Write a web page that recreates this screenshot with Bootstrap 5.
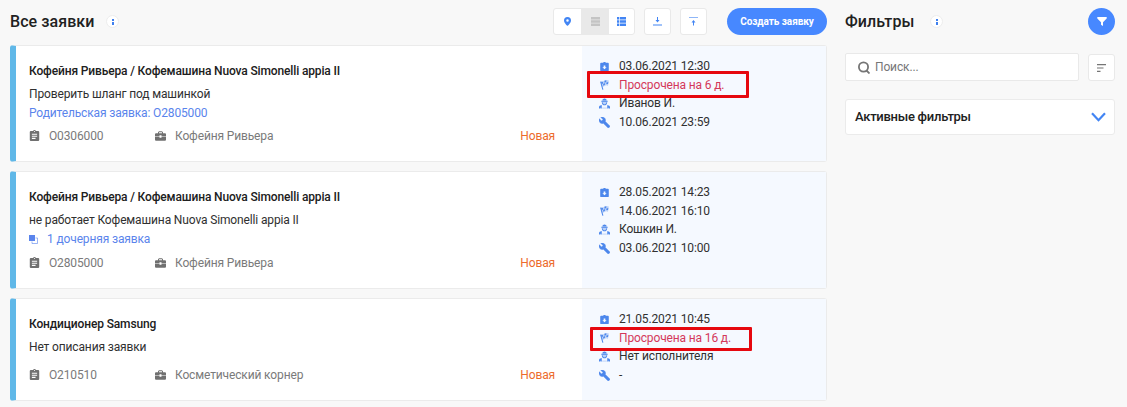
<!DOCTYPE html>
<html lang="ru">
<head>
<meta charset="utf-8">
<meta name="viewport" content="width=device-width, initial-scale=1">
<title>Все заявки</title>
<link href="https://cdn.jsdelivr.net/npm/bootstrap@5.3.0/dist/css/bootstrap.min.css" rel="stylesheet">
<style>
body{font:400 12px/18px Roboto,sans-serif;letter-spacing:-.14px;background:#f8f8f8;color:#303030;height:407px;overflow:hidden}
svg{display:block;flex:none;fill:currentColor}
svg.line{fill:none}
.page{padding:8px 12px 0 10px}
.list-col{width:817px}
.filter-col{width:270px;margin-left:18px}
.bar{height:27px}
.bar h1{font-size:16px;line-height:27px;font-weight:500;color:#212121;letter-spacing:.07px}
.info{width:13px;height:13px;background:#fff;border:1px solid #ededed;color:#3f80ef}
.tool{height:27px;background:#fff;border:1px solid #e9e9e9;border-radius:3px;color:#4285f4}
.tool span{height:100%;display:flex;align-items:center;justify-content:center}
.create{width:100px;height:27px;border-radius:14px;background:#4788ff;color:#fff;font-size:10px;font-weight:700;letter-spacing:-.06px;padding:0}
.ticket{border:1px solid #ebebeb;border-left:6px solid #60b8e8;border-radius:3px;background:#fff;display:flex;margin-bottom:9px}
.body-col{width:566px;padding:15px 27px 15px 13px}
.side-col{background:#f5f9ff;padding:11px 0 0 17px;line-height:18.65px}
.name{font-weight:500;line-height:20px;color:#202020;letter-spacing:-.14px;margin-bottom:3px}
.desc{line-height:20px}
.lnk{line-height:18px;color:#5a84ec}
.meta{color:#7a7a7a;line-height:20px}
.meta .num{width:126px;gap:9px}
.meta .num svg{margin-bottom:1px;color:#707070}
.state{color:#ed6b2c}
.side-col .d-flex{gap:9px}
.side-col svg{color:#4c87ec}
.side-col .late{color:#d4385a}
.mark-box{position:absolute;border:3px solid #e6080f;border-radius:1px}
.search{width:234px;height:28px;border:1px solid #e9e9e9;border-radius:2px;background:#fff;color:#777;padding-left:12px;gap:5px}
.panel{height:36px;border:1px solid #ebebeb;border-radius:3px;background:#fff;margin-top:18px;padding:0 8px 0 9px;font-size:13px;font-weight:500;color:#212121;letter-spacing:-.27px}
</style>
</head>
<body>
<svg width="0" height="0" class="position-absolute">
<symbol id="board" viewBox="2.500 1 19 21"><path fill-rule="evenodd" d="M19 3h-4.200a3 3 0 0 0-5.600 0H5a2 2 0 0 0-2 2v15a2 2 0 0 0 2 2h14a2 2 0 0 0 2-2V5a2 2 0 0 0-2-2zM12 3a1 1 0 1 1 0 2 1 1 0 0 1 0-2zM7 8v2h10V8zm0 4v2h10v-2zm0 4v2h7v-2z"/></symbol>
<symbol id="case" viewBox="1 2 22 19"><path d="M10 15v-2H1v6a2 2 0 0 0 2 2h18a2 2 0 0 0 2-2v-6h-9v2zM21 6h-4V4l-2-2H9L7 4v2H3a2 2 0 0 0-2 2v4h9V10h4v2h9V8a2 2 0 0 0-2-2zm-6 0H9V4h6z"/></symbol>
<symbol id="due" viewBox="2 1 20 21"><path fill-rule="evenodd" d="M20 3h-4.500a4 4 0 0 0-7 0H4a2 2 0 0 0-2 2v15a2 2 0 0 0 2 2h16a2 2 0 0 0 2-2V5a2 2 0 0 0-2-2zm-8 15-5-5h3V9h4v4h3z"/></symbol>
<symbol id="flag" viewBox="1 0 22 23"><path d="M2 4l2-.8L9.500 22 7 22.500z"/><path d="M3 4Q8 5 11 2t11-1l-2 12q-5-2-8 1t-6 1z" opacity=".35"/><path d="M4 4l4 0 1 4-4 1zM12 1.500l4-1 0 4-4 2zM9 9l4-2 0 4-4 2zM17 5l4 0-1 4-4 0z"/></symbol>
<symbol id="man" viewBox="0 1 24 22"><path d="M5 6h14v2H5zM8 5a4 4 0 0 1 8 0z"/><path d="M7 2h10v12H7z" opacity=".35"/><path d="M6 9c0 9 12 9 12 0h-2c0 6-8 6-8 0zM0 23v-4q0-3 6-4v8H4v-3l-1 3zM18 15q6 1 6 4v4h-3l-1-3v3h-2z"/><path d="M7 21h10v2H7z" opacity=".35"/></symbol>
<symbol id="wrench" viewBox="1 1 22 22"><path stroke="currentColor" d="M22.700 19l-9.100-9.100c.9-2.300.4-5-1.500-6.900-2-2-5-2.400-7.400-1.300L9 6 6 9 1.600 4.700C.4 7.100.9 10.100 2.900 12.100c1.900 1.900 4.600 2.400 6.900 1.500l9.100 9.100c.4.4 1 .4 1.400 0l2.300-2.300c.5-.4.5-1.100.1-1.400z"/></symbol>
<symbol id="inf" viewBox="0 0 2 6"><path d="M0 0h2v2H0zM0 3h2v3H0z"/></symbol>
</svg>
<div class="page d-flex align-items-start">
<main class="list-col">
  <div class="bar d-flex align-items-center">
    <h1 class="m-0">Все заявки</h1>
    <span class="info rounded-circle d-flex align-items-center justify-content-center" style="margin-left:12px"><svg width="2" height="6"><use href="#inf"/></svg></span>
    <div class="tool d-flex ms-auto" style="width:82px">
      <span style="width:27px"><svg width="7" height="9" viewBox="0 0 14 18"><path fill-rule="evenodd" d="M7 0a7 7 0 0 0-7 7c0 5 7 11 7 11s7-6 7-11a7 7 0 0 0-7-7zm0 4.500a2.500 2.500 0 1 1 0 5 2.500 2.500 0 0 1 0-5z"/></svg></span>
      <span style="width:28px;background:#e9e9e9;color:#c4c4c4"><svg width="9" height="9"><path d="M0 0h9v2.500H0zM0 3.300h9v2.400H0zM0 6.500h9V9H0z"/></svg></span>
      <span style="width:25px"><svg width="9" height="9"><path d="M0 0h2v2.400H0zM2.700 0H9v2.400H2.700zM0 3.300h2v2.400H0zM2.700 3.300H9v2.400H2.700zM0 6.600h2V9H0zM2.700 6.600H9V9H2.700z"/></svg></span>
    </div>
    <div class="tool" style="width:27px;margin-left:9px"><span><svg width="9" height="9"><path d="M0 7.500h9v1H0zM4 0h1v3h1.500l-2 2.500L2.500 3H4z"/></svg></span></div>
    <div class="tool" style="width:27px;margin-left:9px"><span><svg width="9" height="9"><path d="M0 0h9v1H0z" opacity=".6"/><path d="M4 8.500h1v-3h1.500l-2-2.500-2 2.500H4z"/></svg></span></div>
    <button class="btn create border-0" style="margin-left:20px">Создать заявку</button>
  </div>

  <article class="ticket position-relative" style="height:117px;margin-top:10px">
    <div class="body-col d-flex flex-column">
      <div class="name">Кофейня Ривьера / Кофемашина Nuova Simonelli appia II</div>
      <div class="desc">Проверить шланг под машинкой</div>
      <div class="lnk">Родительская заявка: О2805000</div>
      <div class="meta d-flex mt-auto">
        <div class="num d-flex align-items-center"><svg width="11" height="11"><use href="#board"/></svg>О0306000</div>
        <div class="num d-flex align-items-center"><svg width="11" height="10"><use href="#case"/></svg>Кофейня Ривьера</div>
        <div class="state ms-auto">Новая</div>
      </div>
    </div>
    <div class="side-col flex-grow-1">
      <div class="d-flex align-items-center"><svg width="11" height="9"><use href="#due"/></svg>03.06.2021 12:30</div>
      <div class="d-flex align-items-center late"><svg width="11" height="10"><use href="#flag"/></svg>Просрочена на 6 д.</div>
      <div class="d-flex align-items-center"><svg width="11" height="11"><use href="#man"/></svg>Иванов И.</div>
      <div class="d-flex align-items-center"><svg width="11" height="11"><use href="#wrench"/></svg>10.06.2021 23:59</div>
    </div>
    <div class="mark-box" style="left:571px;top:25px;width:162px;height:27px"></div>
  </article>

  <article class="ticket position-relative" style="height:118px">
    <div class="body-col d-flex flex-column">
      <div class="name">Кофейня Ривьера / Кофемашина Nuova Simonelli appia II</div>
      <div class="desc">не работает Кофемашина Nuova Simonelli appia II</div>
      <div class="lnk d-flex align-items-center" style="gap:9px"><svg width="9" height="9"><path d="M0 0h6v6H0z"/><path d="M6.500 3h2v5.500H3V6.500" fill="none" stroke="currentColor" opacity=".6"/></svg>1 дочерняя заявка</div>
      <div class="meta d-flex mt-auto">
        <div class="num d-flex align-items-center"><svg width="11" height="11"><use href="#board"/></svg>О2805000</div>
        <div class="num d-flex align-items-center"><svg width="11" height="10"><use href="#case"/></svg>Кофейня Ривьера</div>
        <div class="state ms-auto">Новая</div>
      </div>
    </div>
    <div class="side-col flex-grow-1">
      <div class="d-flex align-items-center"><svg width="11" height="9"><use href="#due"/></svg>28.05.2021 14:23</div>
      <div class="d-flex align-items-center"><svg width="11" height="10"><use href="#flag"/></svg>14.06.2021 16:10</div>
      <div class="d-flex align-items-center"><svg width="11" height="11"><use href="#man"/></svg>Кошкин И.</div>
      <div class="d-flex align-items-center"><svg width="11" height="11"><use href="#wrench"/></svg>03.06.2021 10:00</div>
    </div>
  </article>

  <article class="ticket position-relative" style="height:103px">
    <div class="body-col d-flex flex-column">
      <div class="name">Кондиционер Samsung</div>
      <div class="desc">Нет описания заявки</div>
      <div class="meta d-flex mt-auto">
        <div class="num d-flex align-items-center"><svg width="11" height="11"><use href="#board"/></svg>О210510</div>
        <div class="num d-flex align-items-center text-nowrap"><svg width="11" height="10"><use href="#case"/></svg>Косметический корнер</div>
        <div class="state ms-auto">Новая</div>
      </div>
    </div>
    <div class="side-col flex-grow-1">
      <div class="d-flex align-items-center"><svg width="11" height="9"><use href="#due"/></svg>21.05.2021 10:45</div>
      <div class="d-flex align-items-center late"><svg width="11" height="10"><use href="#flag"/></svg>Просрочена на 16 д.</div>
      <div class="d-flex align-items-center"><svg width="11" height="11"><use href="#man"/></svg>Нет исполнителя</div>
      <div class="d-flex align-items-center"><svg width="11" height="11"><use href="#wrench"/></svg>-</div>
    </div>
    <div class="mark-box" style="left:574px;top:28px;width:162px;height:24px"></div>
  </article>
</main>

<aside class="filter-col">
  <div class="bar d-flex align-items-center">
    <h1 class="m-0">Фильтры</h1>
    <span class="info rounded-circle d-flex align-items-center justify-content-center" style="margin-left:16px"><svg width="2" height="6"><use href="#inf"/></svg></span>
    <span class="ms-auto rounded-circle d-flex align-items-center justify-content-center text-white" style="width:27px;height:27px;background:#4788ff"><svg width="10" height="9"><path d="M.3 0h9.400v1.500L6 5.300V9L4 7.800V5.300L.3 1.500z"/></svg></span>
  </div>
  <div class="d-flex align-items-end justify-content-between" style="margin-top:18px">
    <div class="search d-flex align-items-center"><svg class="line" width="12" height="13" viewBox="0 0 12 13" stroke="#757575" stroke-width="1.800"><circle cx="5.500" cy="6" r="4.600"/><path d="M8.500 9.500l3 3"/></svg>Поиск...</div>
    <div class="tool" style="width:27px;color:#757575"><span><svg width="9" height="8"><path d="M0 0h9v1.200H0zM0 3.400h6.500v1.200H0zM0 6.800h3.500V8H0z"/></svg></span></div>
  </div>
  <div class="panel d-flex align-items-center justify-content-between">Активные фильтры
    <svg class="line" width="15" height="10" stroke="#4285f4" stroke-width="2.200"><path d="M1 1.200l6.500 7L14 1.200"/></svg>
  </div>
</aside>
</div>
<script src="https://cdn.jsdelivr.net/npm/bootstrap@5.3.0/dist/js/bootstrap.bundle.min.js"></script>
</body>
</html>
